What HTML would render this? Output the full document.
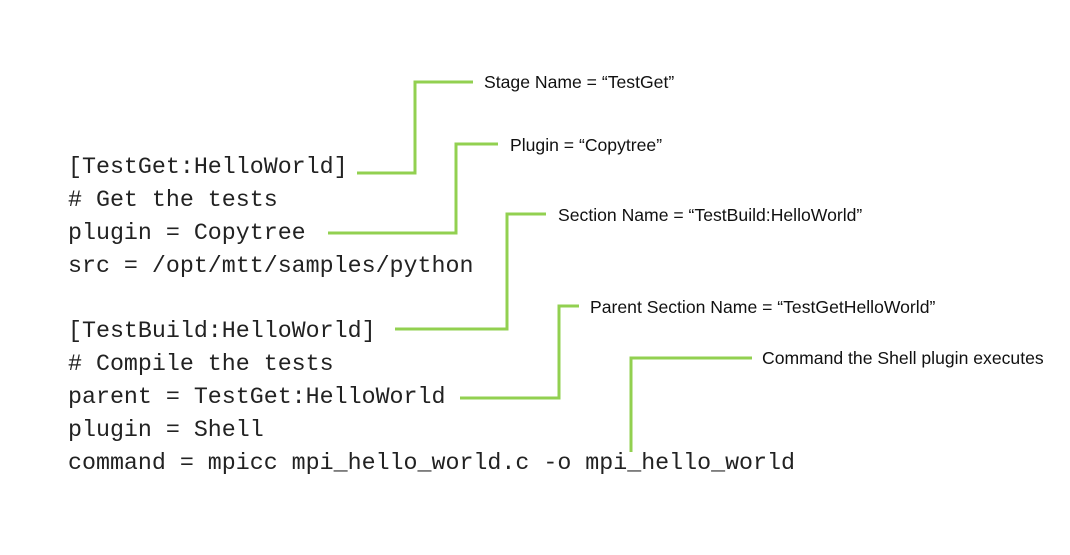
<!DOCTYPE html>
<html><head><meta charset="utf-8"><style>
html,body{margin:0;padding:0;background:#fff;width:1070px;height:555px;overflow:hidden;position:relative}
.code{position:absolute;left:68px;font-family:"Liberation Mono",monospace;font-size:23.3px;color:#222;white-space:pre;line-height:33px}
.lbl{position:absolute;font-family:"Liberation Sans",sans-serif;font-size:17.6px;color:#111;white-space:pre;line-height:20px;letter-spacing:0}
svg{position:absolute;left:0;top:0}
</style></head><body>
<div class="code" style="top:151px">[TestGet:HelloWorld]
# Get the tests
plugin = Copytree
src = /opt/mtt/samples/python</div>
<div class="code" style="top:315px">[TestBuild:HelloWorld]
# Compile the tests
parent = TestGet:HelloWorld
plugin = Shell
command = mpicc mpi_hello_world.c -o mpi_hello_world</div>
<svg width="1070" height="555">
<g fill="none" stroke="#92d050" stroke-width="3">
<polyline points="357,173 415,173 415,82 473,82"/>
<polyline points="328,233 456,233 456,144 498,144"/>
<polyline points="395,329 507,329 507,214 546,214"/>
<polyline points="460,398 559,398 559,306 579,306"/>
<polyline points="631,452 631,358 752,358"/>
</g>
</svg>
<div class="lbl" style="left:484px;top:72px">Stage Name = “TestGet”</div>
<div class="lbl" style="left:510px;top:135px">Plugin = “Copytree”</div>
<div class="lbl" style="left:558px;top:205px">Section Name = “TestBuild:HelloWorld”</div>
<div class="lbl" style="left:590px;top:297px">Parent Section Name = “TestGetHelloWorld”</div>
<div class="lbl" style="left:762px;top:348px">Command the Shell plugin executes</div>
</body></html>
